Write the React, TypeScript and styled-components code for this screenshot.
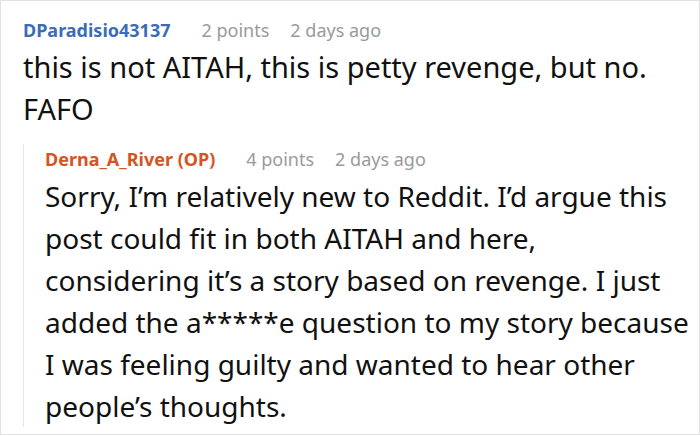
import React from 'react';
import styled, { createGlobalStyle } from 'styled-components';

const GlobalStyle = createGlobalStyle`
  html, body {
    margin: 0;
    padding: 0;
    background: #ffffff;
  }
  body {
    font-family: 'Noto Sans', 'Open Sans', sans-serif;
  }
`;

const Frame = styled.div`
  box-sizing: border-box;
  width: 700px;
  height: 435px;
  border: 1px solid #e2e2e2;
  padding: 14px 8px 0 22px;
  overflow: hidden;
  background: #fff;
`;

const Comment = styled.div``;

const Reply = styled.div`
  border-left: 1px solid #e4e4e4;
  padding-left: 21px;
  margin-top: 28px;
`;

const Meta = styled.div<{ $nested?: boolean }>`
  display: flex;
  align-items: baseline;
  font-size: 18px;
  line-height: 30px;
  color: #9a9a9a;
  margin-top: ${({ $nested }) => ($nested ? '-14px' : '0')};
`;

const Author = styled.span<{ $color: string }>`
  font-weight: 700;
  color: ${({ $color }) => $color};
  margin-right: 31px;
`;

const Stat = styled.span`
  margin-right: 21px;
`;

const Body = styled.p<{ $nested?: boolean }>`
  margin: 1px 0 ${({ $nested }) => ($nested ? '-8px' : '0')};
  font-size: ${({ $nested }) => ($nested ? '28px' : '29px')};
  line-height: 42px;
  color: #111;
`;

type CommentData = {
  author: string;
  color: string;
  points: string;
  age: string;
  text: string;
};

const parent: CommentData = {
  author: 'DParadisio43137',
  color: '#3b6cb7',
  points: '2 points',
  age: '2 days ago',
  text: 'this is not AITAH, this is petty revenge, but no. FAFO',
};

const reply: CommentData = {
  author: 'Derna_A_River (OP)',
  color: '#d5541f',
  points: '4 points',
  age: '2 days ago',
  text:
    'Sorry, I’m relatively new to Reddit. I’d argue this post could fit in both AITAH and here, considering it’s a story based on revenge. I just added the a*****e question to my story because I was feeling guilty and wanted to hear other people’s thoughts.',
};

const CommentHead: React.FC<{ c: CommentData; nested?: boolean }> = ({ c, nested }) => (
  <Meta $nested={nested}>
    <Author $color={c.color}>{c.author}</Author>
    <Stat>{c.points}</Stat>
    <Stat>{c.age}</Stat>
  </Meta>
);

export default function App() {
  return (
    <>
      <GlobalStyle />
      <Frame>
        <Comment>
          <CommentHead c={parent} />
          <Body>{parent.text}</Body>
          <Reply>
            <CommentHead c={reply} nested />
            <Body $nested>{reply.text}</Body>
          </Reply>
        </Comment>
      </Frame>
    </>
  );
}
